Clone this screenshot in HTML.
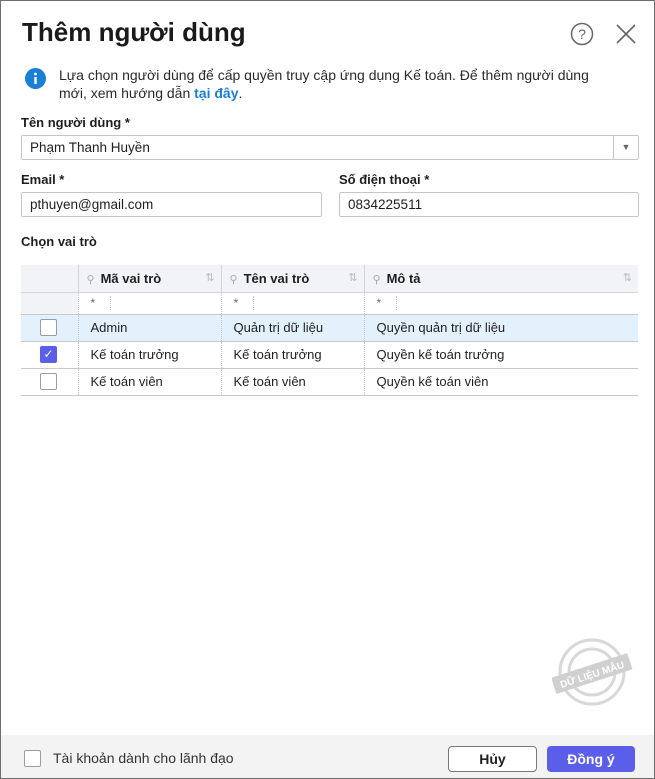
<!DOCTYPE html>
<html><head><meta charset="utf-8"><style>
*{box-sizing:border-box;margin:0;padding:0}
body{width:655px;height:779px;font-family:"Liberation Sans",sans-serif;color:#1f1f1f;background:#fff;position:relative;overflow:hidden}
.frame{position:absolute;left:0;top:0;width:655px;height:779px;border:1px solid #6d6d6d}
.abs{position:absolute}
h1{position:absolute;left:22px;top:17px;font-size:26px;font-weight:bold;color:#1a1a1a}
.lbl{position:absolute;font-size:13px;font-weight:bold}
.inp{position:absolute;border:1px solid #c4c6cc;border-radius:2px;font-size:13.5px;padding-left:8px;line-height:23px;height:25px}
table{position:absolute;left:21px;top:265px;width:617px;border-collapse:collapse;font-size:13px}
td{height:27px;border-bottom:1px solid #c7c9cf;padding-left:12px}
.h td{background:#f2f3f7;font-weight:bold;border-bottom:1px solid #d2d4da;height:27px}
.f td{height:22px;color:#666;font-size:12px}
td+td{border-left:1px dotted #c4c6cc}
.h td+td{border-left:1px solid #d2d4da}
.cb{display:inline-block;width:17px;height:17px;border:1px solid #9a9ca3;border-radius:2px;background:#fff;vertical-align:middle}
.pin{color:#aaa;font-weight:normal;font-size:11px;margin-right:6px}
.sort{float:right;color:#bbb;font-weight:normal;font-size:11px;margin-right:6px}
</style></head><body>
<div class="frame"></div>
<h1>Thêm người dùng</h1>
<svg class="abs" style="left:570px;top:22px" width="24" height="24"><circle cx="12" cy="12" r="10.5" fill="none" stroke="#666" stroke-width="1.5"/><text x="12" y="17" font-size="14" text-anchor="middle" fill="#666" font-family="Liberation Sans">?</text></svg>
<svg class="abs" style="left:615px;top:23px" width="22" height="22"><path d="M2 2L20 20M20 2L2 20" stroke="#666" stroke-width="1.6"/></svg>
<svg class="abs" style="left:25px;top:68px" width="21" height="21"><circle cx="10.5" cy="10.5" r="10.5" fill="#1a7fd6"/><rect x="9.3" y="9" width="2.4" height="7" fill="#fff"/><circle cx="10.5" cy="6" r="1.4" fill="#fff"/></svg>
<div class="abs" style="left:59px;top:66px;font-size:14px;line-height:18px;width:556px;color:#2a2a2a">Lựa chọn người dùng để cấp quyền truy cập ứng dụng Kế toán. Để thêm người dùng mới, xem hướng dẫn <b style="color:#1a7fd6">tại đây</b>.</div>
<div class="lbl" style="left:21px;top:115px">Tên người dùng *</div>
<div class="inp" style="left:21px;top:135px;width:618px">Phạm Thanh Huyền<span class="abs" style="right:0;top:0;width:25px;height:23px;border-left:1px solid #c4c6cc;text-align:center;font-size:9px;color:#666">▼</span></div>
<div class="lbl" style="left:21px;top:172px">Email *</div>
<div class="lbl" style="left:339px;top:172px">Số điện thoại *</div>
<div class="inp" style="left:21px;top:192px;width:301px">pthuyen@gmail.com</div>
<div class="inp" style="left:339px;top:192px;width:300px">0834225511</div>
<div class="lbl" style="left:21px;top:234px">Chọn vai trò</div>
<table>
<tr class="h"><td style="width:57px"></td><td style="width:143px;padding-left:8px"><span class="pin">⚲</span>Mã vai trò<span class="sort">⇅</span></td><td style="width:143px;padding-left:8px"><span class="pin">⚲</span>Tên vai trò<span class="sort">⇅</span></td><td style="padding-left:8px"><span class="pin">⚲</span>Mô tả<span class="sort">⇅</span></td></tr>
<tr class="f"><td style="background:#f2f3f7"></td><td><span style="display:inline-block;width:20px;border-right:1px dotted #c4c6cc">*</span></td><td><span style="display:inline-block;width:20px;border-right:1px dotted #c4c6cc">*</span></td><td><span style="display:inline-block;width:20px;border-right:1px dotted #c4c6cc">*</span></td></tr>
<tr style="background:#e3f1fd"><td style="padding-left:19px"><span class="cb"></span></td><td>Admin</td><td>Quản trị dữ liệu</td><td>Quyền quản trị dữ liệu</td></tr>
<tr><td style="padding-left:19px"><span class="cb" style="background:#5b5ee8;border-color:#5b5ee8;color:#fff;font-size:12px;text-align:center;line-height:15px">✓</span></td><td>Kế toán trưởng</td><td>Kế toán trưởng</td><td>Quyền kế toán trưởng</td></tr>
<tr><td style="padding-left:19px"><span class="cb"></span></td><td>Kế toán viên</td><td>Kế toán viên</td><td>Quyền kế toán viên</td></tr>
</table>
<svg class="abs" style="left:552px;top:636px" width="82" height="72"><g fill="none" stroke="#d8d8d8" stroke-width="3"><circle cx="40" cy="36" r="32"/><circle cx="40" cy="36" r="23"/></g><g transform="rotate(-18 40 38)"><rect x="0" y="29" width="80" height="17" fill="#d0d0d0"/><text x="40" y="42" font-size="10" font-weight="bold" fill="#fff" text-anchor="middle" font-family="Liberation Sans">DỮ LIỆU MẪU</text></g></svg>
<div class="abs" style="left:1px;top:735px;width:653px;height:43px;background:#f3f3f3"></div>
<span class="cb abs" style="left:24px;top:750px"></span>
<div class="abs" style="left:53px;top:750px;font-size:14px;color:#333">Tài khoản dành cho lãnh đạo</div>
<div class="abs" style="left:448px;top:746px;width:89px;height:26px;border:1px solid #777;border-radius:4px;background:#fff;text-align:center;line-height:24px;font-size:14px;font-weight:bold">Hủy</div>
<div class="abs" style="left:547px;top:746px;width:88px;height:26px;border-radius:4px;background:#5b5ee8;color:#fff;text-align:center;line-height:26px;font-size:14px;font-weight:bold">Đồng ý</div>
</body></html>
